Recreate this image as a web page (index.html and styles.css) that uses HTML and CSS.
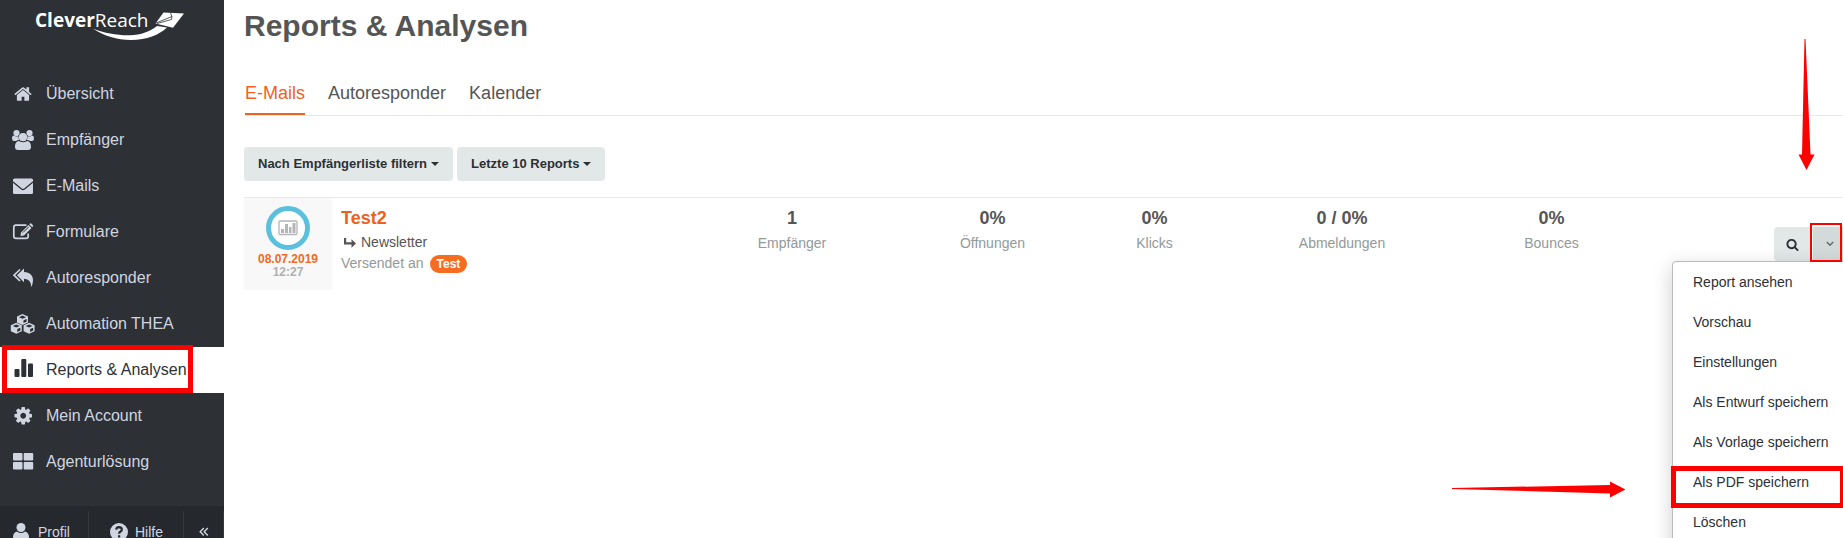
FILE: index.html
```html
<!DOCTYPE html>
<html lang="de">
<head>
<meta charset="utf-8">
<title>CleverReach – Reports &amp; Analysen</title>
<link rel="stylesheet" href="styles.css">
</head>
<body>
<div class="app">
  <aside class="sidebar">
    <a class="logo" href="#" aria-label="CleverReach">
      <svg width="152" height="36" viewBox="0 0 152 36">
        <text x="0" y="19" class="logo-text"><tspan class="logo-bold">Clever</tspan>Reach</text>
        <path d="M58 20.500C70 25.500 83 27.500 95 27.200C106 27 115 23.500 122 18L132 19.500C124 27 112 32 96 32C82 32 69 28 58 20.500Z"/>
        <path d="M128.500 4.500L149 5.500L138 19.800L120.500 15.500Z"/>
        <path class="logo-fold" d="M121 15L137 8.500L135.500 5M137 8.500L136.500 11.500L122 15.500"/>
      </svg>
    </a>
    <nav class="nav">
      <a class="nav-item" href="#">
        <svg class="nav-icon" viewBox="0 0 26 22"><path transform="translate(3.500 1.500) scale(.0106)" d="M1472 992v480q0 26-19 45t-45 19h-384v-384h-256v384h-384q-26 0-45-19t-19-45v-480q0-1 .5-3t.5-3l575-474 575 474q1 2 1 6zm223-69l-62 74q-8 9-21 11h-3q-13 0-21-7l-692-577-692 577q-12 8-24 7-13-2-21-11l-62-74q-8-10-7-23.500t11-21.500l719-599q32-26 76-26t76 26l244 204v-195q0-14 9-23t23-9h192q14 0 23 9t9 23v408l219 182q10 8 11 21.500t-7 23.500z"/></svg>
        Übersicht</a>
      <a class="nav-item" href="#">
        <svg class="nav-icon" viewBox="0 0 26 22"><circle cx="6.500" cy="4" r="3.100"/><circle cx="19.500" cy="4" r="3.100"/><path d="M2 9.500Q2 6.500 4 6.500Q6.500 8 9 7V12H4Q2 12 2 9.500ZM24 9.500Q24 6.500 22 6.500Q19.500 8 17 7V12H22Q24 12 24 9.500Z"/><circle class="cut" cx="13" cy="8" r="4.600"/><path class="cut" d="M4.500 19C4.500 14 6 11 8.500 11H17.500C20 11 21.500 14 21.500 19Z"/><circle cx="13" cy="8.200" r="4.100"/><path d="M9 12Q13 14.600 17 12C20 12.300 21 15 21 18Q21 21 18 21H8Q5 21 5 18C5 15 6 12.300 9 12Z"/></svg>
        Empfänger</a>
      <a class="nav-item" href="#">
        <svg class="nav-icon" viewBox="0 0 26 22"><rect x="3" y="3.500" width="20" height="15.500" rx="1.500"/><path class="cut-line" d="M3 7L11.500 14Q13 15 14.500 14L23 7"/></svg>
        E-Mails</a>
      <a class="nav-item" href="#">
        <svg class="nav-icon" viewBox="0 0 26 22"><path class="line" d="M16.500 4.200H6Q3.800 4.200 3.800 6.400V15.200Q3.800 17.400 6 17.400H16Q18.200 17.400 18.200 15.200V12.500"/><path d="M11 11.500L18.500 4L21.500 7L14 14.500L10.500 15ZM19.200 3.300L20.300 2.400Q20.800 2 21.300 2.500L23 4.200Q23.400 4.700 23 5.200L22.200 6.300Z"/><path class="cut-thin" d="M13 11.500L18.500 6"/></svg>
        Formulare</a>
      <a class="nav-item" href="#">
        <svg class="nav-icon" viewBox="0 0 26 22"><path class="line" d="M10 2.500L4 8.200L10 14"/><path d="M7 8.200L14 1.500V5C20 5.400 23 8.500 23 13.500Q23 17 21 20.200Q21.500 12 14 11.700V15.200Z"/></svg>
        Autoresponder</a>
      <a class="nav-item" href="#">
        <svg class="nav-icon" viewBox="0 0 26 22"><g id="cube"><path d="M12.500 1L18 3.500V9.500L12.500 12L7 9.500V3.500Z"/><path class="cut" d="M12.500 2.600L16 4.200L12.500 5.700L9 4.200ZM13.500 7.300L16.600 5.900V8.700L13.500 10.100Z"/></g><use href="#cube" x="-6.200" y="8.800"/><use href="#cube" x="6.600" y="8.800"/></svg>
        Automation THEA</a>
      <a class="nav-item is-active" href="#" aria-current="page">
        <svg class="nav-icon" viewBox="0 0 26 22"><rect x="4.500" y="10" width="5" height="8" rx="1"/><rect x="11.300" y="0" width="5" height="18" rx="1"/><rect x="18" y="4.500" width="5" height="13.500" rx="1"/></svg>
        Reports &amp; Analysen</a>
      <a class="nav-item" href="#">
        <svg class="nav-icon" viewBox="0 0 26 22"><path transform="translate(3 .5) scale(.0114)" d="M1152 896q0-106-75-181t-181-75-181 75-75 181 75 181 181 75 181-75 75-181zm512-109v222q0 12-8 23t-20 13l-185 28q-19 54-39 91 35 50 107 138 10 12 10 25t-9 23q-27 37-99 108t-94 71q-12 0-26-9l-138-108q-44 23-91 38-16 136-29 186-7 28-36 28h-222q-14 0-24.500-8.500t-11.500-21.500l-28-184q-49-16-90-37l-141 107q-10 9-25 9-14 0-25-11-126-114-165-168-7-10-7-23 0-12 8-23 15-21 51-66.500t54-70.500q-27-50-41-99l-183-27q-13-2-21-12.500t-8-23.500v-222q0-12 8-23t19-13l186-28q14-46 39-92-40-57-107-138-10-12-10-24 0-10 9-23 26-36 98.500-107.500t94.500-71.500q13 0 26 10l138 107q44-23 91-38 16-136 29-186 7-28 36-28h222q14 0 24.500 8.500t11.500 21.500l28 184q49 16 90 37l142-107q9-9 24-9 13 0 25 10 129 119 165 170 7 8 7 22 0 12-8 23-15 21-51 66.500t-54 70.500q26 50 41 98l183 28q13 2 21 12.500t8 23.500z"/></svg>
        Mein Account</a>
      <a class="nav-item" href="#">
        <svg class="nav-icon" viewBox="0 0 26 22"><rect x="3" y="2" width="9.500" height="7.500" rx="1"/><rect x="13.700" y="2" width="9.500" height="7.500" rx="1"/><rect x="3" y="11" width="9.500" height="7.500" rx="1"/><rect x="13.700" y="11" width="9.500" height="7.500" rx="1"/></svg>
        Agenturlösung</a>
      <span class="mark mark-nav"></span>
    </nav>
    <div class="side-foot">
      <a class="foot-item foot-profile" href="#"><svg width="18" height="18" viewBox="0 0 18 18"><circle cx="9" cy="4.500" r="4.500"/><path d="M5 8.500Q9 11.500 13 8.500Q17 9.500 17 14.500Q17 18 14 18H4Q1 18 1 14.500Q1 9.500 5 8.500Z"/></svg>Profil</a>
      <a class="foot-item foot-help" href="#"><svg width="18" height="18" viewBox="0 0 18 18"><circle cx="9" cy="9" r="9"/><path class="question" d="M6.200 6.600Q6.500 4.200 9 4.200Q11.800 4.300 11.800 6.500Q11.800 8 10.200 8.800Q9.100 9.400 9.100 10.800M9.100 12.300V14.500"/></svg>Hilfe</a>
      <button class="foot-item foot-toggle" type="button" aria-label="Menü einklappen"><svg width="10" height="10" viewBox="0 0 10 10"><path class="chevrons" d="M4.800 1L1.200 4.800L4.800 8.600M8.800 1L5.200 4.800L8.800 8.600"/></svg></button>
    </div>
  </aside>

  <main class="main">
    <h1 class="title">Reports &amp; Analysen</h1>
    <nav class="tabs">
      <a class="tab is-current" href="#">E-Mails</a>
      <a class="tab" href="#">Autoresponder</a>
      <a class="tab" href="#">Kalender</a>
    </nav>
    <div class="filters">
      <button class="filter" type="button">Nach Empfängerliste filtern<span class="caret"></span></button>
      <button class="filter" type="button">Letzte 10 Reports<span class="caret"></span></button>
    </div>

    <article class="report">
      <div class="stamp">
        <span class="ring"><svg width="20" height="16" viewBox="0 0 20 16"><rect class="frame" x="1" y="1" width="18" height="13.500" rx="1"/><path d="M3 9h3v4H3zM7 4h3v9H7zM11 7h2.500v6H11zM14.500 3h3v10h-3z"/></svg></span>
        <span class="date">08.07.2019</span>
        <span class="time">12:27</span>
      </div>
      <div class="info">
        <h2 class="name"><a href="#">Test2</a></h2>
        <p class="kind"><svg width="14" height="12" viewBox="0 0 14 12"><path d="M1 1H3.200V5.200H8.500V2.200L13 6.500L8.500 10.800V7.600H1Z"/></svg>Newsletter</p>
        <p class="sent">Versendet an<span class="badge">Test</span></p>
      </div>
      <div class="stat"><strong>1</strong><span>Empfänger</span></div>
      <div class="stat"><strong>0%</strong><span>Öffnungen</span></div>
      <div class="stat"><strong>0%</strong><span>Klicks</span></div>
      <div class="stat"><strong>0 / 0%</strong><span>Abmeldungen</span></div>
      <div class="stat"><strong>0%</strong><span>Bounces</span></div>
      <div class="actions">
        <button class="action action-view" type="button" aria-label="Report ansehen"><svg width="13" height="13" viewBox="0 0 1792 1792"><path d="M1216 832q0-185-131.500-316.500t-316.500-131.500-316.500 131.500-131.500 316.500 131.500 316.500 316.500 131.500 316.500-131.500 131.500-316.500zm512 832q0 52-38 90t-90 38q-54 0-90-38l-343-342q-179 124-399 124-143 0-273.500-55.500t-225-150-150-225-55.500-273.500 55.500-273.500 150-225 225-150 273.500-55.500 273.500 55.500 225 150 150 225 55.500 273.500q0 220-124 399l343 343q37 37 37 90z"/></svg></button>
        <button class="action action-more" type="button" aria-label="Weitere Aktionen" aria-expanded="true"><svg width="8" height="6" viewBox="0 0 8 6"><path class="angle" d="M.8 1L4 4.200L7.200 1"/></svg></button>
        <span class="mark mark-more"></span>
        <div class="menu">
          <a class="menu-item" href="#">Report ansehen</a>
          <a class="menu-item" href="#">Vorschau</a>
          <a class="menu-item" href="#">Einstellungen</a>
          <a class="menu-item" href="#">Als Entwurf speichern</a>
          <a class="menu-item" href="#">Als Vorlage speichern</a>
          <a class="menu-item" href="#">Als PDF speichern</a>
          <a class="menu-item" href="#">Löschen</a>
          <span class="mark mark-pdf"></span>
        </div>
      </div>
    </article>
    <svg class="arrow arrow-down" width="17" height="132" viewBox="0 0 17 132"><path d="M6.500 0H7.500L12.500 115.500H16.500L8.500 131L.5 115.500H4Z"/></svg>
    <svg class="arrow arrow-right" width="174" height="17" viewBox="0 0 174 17"><path d="M0 7L158 4V.5L173.500 8.500L158 16.500V12.500L0 8Z"/></svg>
  </main>
</div>
</body>
</html>
```
FILE: styles.css
```css
* {
  box-sizing: border-box;
}

body {
  margin: 0;
  background: #fff;
  color: #555;
  font-family: "Liberation Sans", Arial, sans-serif;
  font-size: 14px;
  line-height: 20px;
}

a {
  color: inherit;
  text-decoration: none;
}

button {
  border: 0;
  font: inherit;
  color: inherit;
  cursor: pointer;
}

svg {
  display: block;
  flex: none;
  fill: currentColor;
}

.app {
  display: flex;
  height: 100vh;
  overflow: hidden;
}

/* Sidebar */
.sidebar {
  display: flex;
  flex: none;
  flex-direction: column;
  width: 224px;
  background: #2d3034;
  color: #cfd6e2;
}

.logo {
  flex: none;
  height: 71px;
  padding: 8px 0 0 35px;
  color: #fff;
}

.logo-text {
  font-family: "Open Sans", sans-serif;
  font-size: 19px;
}

.logo-bold {
  font-weight: 700;
}

.logo-fold {
  fill: none;
  stroke: #2d3034;
  stroke-width: 0.8;
}

.nav {
  position: relative;
  flex: none;
  margin-bottom: 21px;
}

.nav-item {
  display: flex;
  align-items: center;
  gap: 10px;
  height: 46px;
  padding-left: 10px;
  font-size: 16px;
  white-space: nowrap;
}

.nav-icon {
  width: 26px;
  height: 22px;
}

.nav-item.is-active {
  background: #fff;
  color: #2d3034;
}

.cut {
  fill: #2d3034;
}

.cut-line,
.cut-thin {
  fill: none;
  stroke: #2d3034;
  stroke-width: 1.3;
}

.cut-thin {
  stroke-width: 1;
}

.line {
  fill: none;
  stroke: currentColor;
  stroke-width: 1.7;
}

.side-foot {
  display: flex;
  flex: none;
  padding-top: 5px;
  background: #25282d;
}

.foot-item {
  display: flex;
  align-items: center;
  height: 42px;
  border-right: 1px solid #35393e;
}

.foot-profile {
  gap: 8px;
  width: 89px;
  padding-left: 12px;
}

.foot-help {
  gap: 7px;
  width: 95px;
  padding-left: 21px;
}

.foot-toggle {
  flex: 1;
  justify-content: center;
  padding: 0;
  background: none;
}

.question {
  fill: none;
  stroke: #25282d;
  stroke-width: 2.2;
}

.chevrons {
  fill: none;
  stroke: currentColor;
  stroke-width: 1.4;
}

/* Content */
.main {
  position: relative;
  flex: 1;
  min-width: 0;
  padding: 8px 0 0 20px;
}

.title {
  margin: 0 0 37px;
  color: #555;
  font-size: 30px;
  line-height: 36px;
}

.tabs {
  display: flex;
  gap: 23px;
  margin-bottom: 31px;
  padding-left: 1px;
  border-bottom: 1px solid #e8e8e8;
  font-size: 18px;
  line-height: 24px;
}

.tab {
  padding-bottom: 8px;
  border-bottom: 2px solid transparent;
}

.tab.is-current {
  border-color: #e8641f;
  color: #f0611f;
}

.filters {
  display: flex;
  gap: 4px;
  margin-bottom: 16px;
}

.filter {
  display: flex;
  align-items: center;
  gap: 4px;
  height: 34px;
  padding: 0 14px;
  border-radius: 4px;
  background: #e2e8e7;
  color: #2d3034;
  font-size: 13px;
  font-weight: 700;
}

.caret {
  border: 4px solid transparent;
  border-top-color: currentColor;
  border-bottom: 0;
}

/* Report row */
.report {
  display: grid;
  grid-template-columns: 88px 360fr 200fr 201fr 123fr 252fr 167fr 208fr;
  border-top: 1px solid #e8e8e8;
}

.stamp {
  display: flex;
  flex-direction: column;
  align-items: center;
  height: 92px;
  padding-top: 8px;
  background: #f8f8f8;
  font-size: 12px;
  font-weight: 700;
  line-height: 13px;
}

.ring {
  display: flex;
  align-items: center;
  justify-content: center;
  width: 44px;
  height: 44px;
  margin-bottom: 3px;
  border: 5px solid #5bc0de;
  border-radius: 50%;
  background: #fff;
  color: #b5b5b5;
}

.frame {
  fill: none;
  stroke: currentColor;
  stroke-width: 1.3;
}

.date {
  color: #f26a21;
}

.time {
  color: #b0b0b0;
}

.info {
  padding: 6px 0 0 9px;
}

.name {
  margin: 0;
  color: #ea621f;
  font-size: 18px;
  line-height: 28px;
}

.kind,
.sent {
  display: flex;
  align-items: center;
  margin: 0;
  line-height: 21px;
}

.kind {
  gap: 4px;
  padding-left: 2px;
}

.sent {
  gap: 6px;
  color: #919999;
}

.badge {
  padding: 0 7px;
  border-radius: 9px;
  background: #f66d22;
  color: #fff;
  font-size: 12px;
  font-weight: 700;
  line-height: 18px;
}

.stat {
  display: flex;
  flex-direction: column;
  align-items: center;
  padding-top: 6px;
  color: #919999;
  line-height: 22px;
}

.stat strong {
  color: #555;
  font-size: 18px;
  line-height: 28px;
}

.actions {
  position: relative;
  display: flex;
  align-items: flex-start;
  justify-content: flex-end;
  gap: 2px;
  padding-top: 29px;
}

.action {
  display: flex;
  align-items: center;
  justify-content: center;
  height: 34px;
  padding: 0;
  background: #e2e8e7;
  color: #2d3034;
}

.action-view {
  width: 37px;
  border-radius: 4px 0 0 4px;
}

.action-more {
  width: 34px;
  margin-right: -4px;
  background: #d4dada;
  color: #666;
}

.angle {
  fill: none;
  stroke: currentColor;
  stroke-width: 1.4;
}

.menu {
  position: absolute;
  top: 63px;
  right: -12px;
  width: 183px;
  padding: 0 0 8px;
  border: 1px solid #bbb;
  border-radius: 4px;
  background: #fff;
  box-shadow: 0 6px 20px rgba(0, 0, 0, 0.2);
  color: #2d3034;
}

.menu-item {
  display: block;
  padding: 10px 20px;
  white-space: nowrap;
}

/* Red annotations over the page */
.mark {
  position: absolute;
  z-index: 1;
  border: 5px solid #f00;
}

.mark-nav {
  top: 274px;
  left: 2px;
  width: 191px;
  height: 48px;
}

.mark-more {
  top: 25px;
  right: 1px;
  width: 32px;
  height: 39px;
  border-width: 2px;
}

.mark-pdf {
  top: 204px;
  left: -2px;
  width: 174px;
  height: 42px;
}

.arrow {
  position: absolute;
  color: #f00;
}

.arrow-down {
  top: 39px;
  right: 28px;
}

.arrow-right {
  top: 481px;
  right: 217px;
}
```
